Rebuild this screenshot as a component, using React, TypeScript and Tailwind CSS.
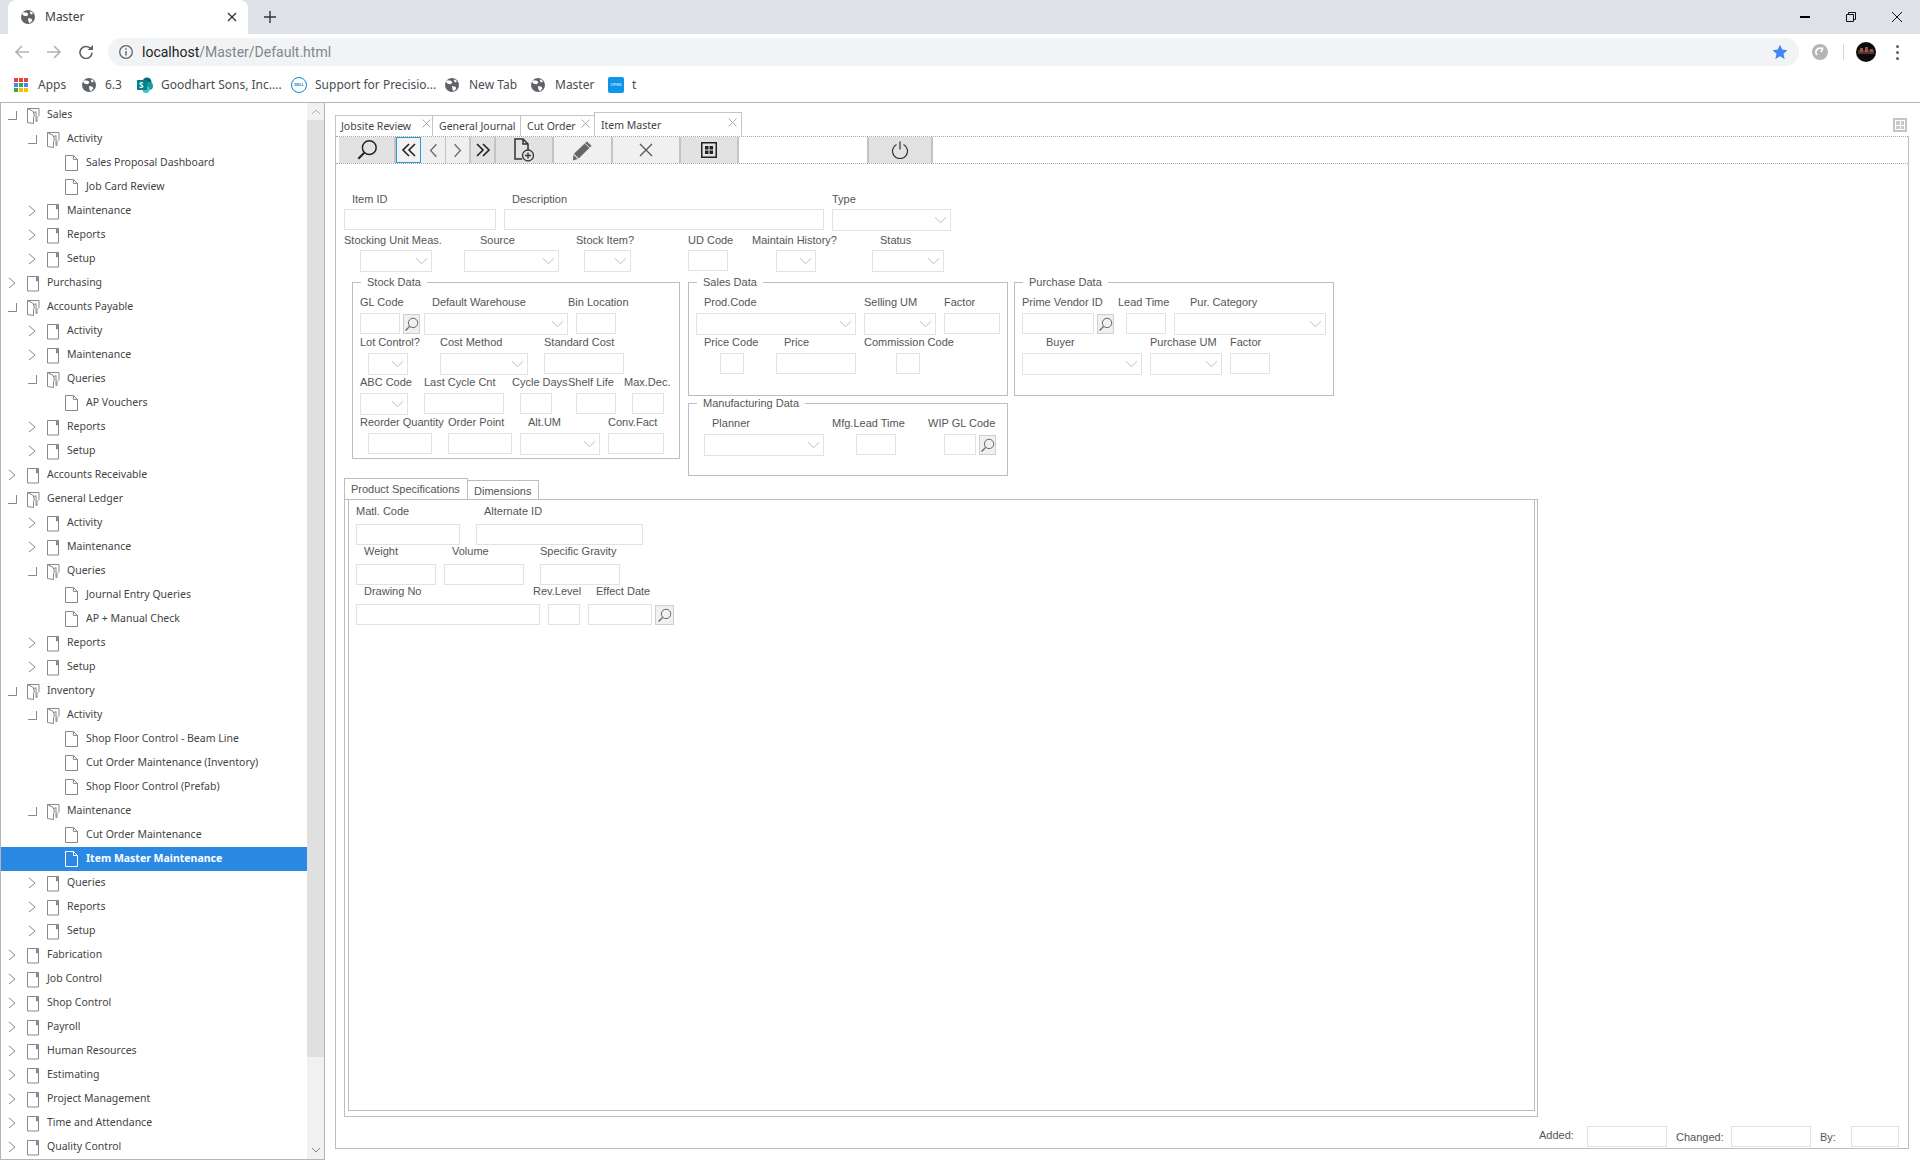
import type { ReactNode } from 'react';

type TreeRow = { level: 0 | 1 | 2; label: string; open?: boolean; selected?: boolean };

const treeRows: TreeRow[] = [
  { level: 0, label: 'Sales', open: true },
  { level: 1, label: 'Activity', open: true },
  { level: 2, label: 'Sales Proposal Dashboard' },
  { level: 2, label: 'Job Card Review' },
  { level: 1, label: 'Maintenance' },
  { level: 1, label: 'Reports' },
  { level: 1, label: 'Setup' },
  { level: 0, label: 'Purchasing' },
  { level: 0, label: 'Accounts Payable', open: true },
  { level: 1, label: 'Activity' },
  { level: 1, label: 'Maintenance' },
  { level: 1, label: 'Queries', open: true },
  { level: 2, label: 'AP Vouchers' },
  { level: 1, label: 'Reports' },
  { level: 1, label: 'Setup' },
  { level: 0, label: 'Accounts Receivable' },
  { level: 0, label: 'General Ledger', open: true },
  { level: 1, label: 'Activity' },
  { level: 1, label: 'Maintenance' },
  { level: 1, label: 'Queries', open: true },
  { level: 2, label: 'Journal Entry Queries' },
  { level: 2, label: 'AP + Manual Check' },
  { level: 1, label: 'Reports' },
  { level: 1, label: 'Setup' },
  { level: 0, label: 'Inventory', open: true },
  { level: 1, label: 'Activity', open: true },
  { level: 2, label: 'Shop Floor Control - Beam Line' },
  { level: 2, label: 'Cut Order Maintenance (Inventory)' },
  { level: 2, label: 'Shop Floor Control (Prefab)' },
  { level: 1, label: 'Maintenance', open: true },
  { level: 2, label: 'Cut Order Maintenance' },
  { level: 2, label: 'Item Master Maintenance', selected: true },
  { level: 1, label: 'Queries' },
  { level: 1, label: 'Reports' },
  { level: 1, label: 'Setup' },
  { level: 0, label: 'Fabrication' },
  { level: 0, label: 'Job Control' },
  { level: 0, label: 'Shop Control' },
  { level: 0, label: 'Payroll' },
  { level: 0, label: 'Human Resources' },
  { level: 0, label: 'Estimating' },
  { level: 0, label: 'Project Management' },
  { level: 0, label: 'Time and Attendance' },
  { level: 0, label: 'Quality Control' },
];

const levelPad = { 0: 'pl-[6px]', 1: 'pl-[26px]', 2: 'pl-[64px]' };

// small drawings

const Globe = ({ className = '' }: { className?: string }) => (
  <svg viewBox="0 0 16 16" className={`h-[14px] w-[14px] shrink-0 ${className}`}>
    <circle cx="8" cy="8" r="8" fill="#5f6368" />
    <path d="M3 2.5 7 3 8.5 5 6.5 7 3 6.5 1 4ZM8 9l4 1 1 2-3 3-1.500-2ZM11 1.500l3 2.500-2.500 1L10 3Z" fill="#fff" />
  </svg>
);

const TreeChevron = ({ white = false }: { white?: boolean }) => (
  <svg viewBox="0 0 8 12" className="h-[12px] w-[8px]">
    <path d="M1 1l6 5-6 5" fill="none" stroke={white ? '#fff' : '#888'} strokeWidth="1" />
  </svg>
);

const TreeCollapse = () => (
  <svg viewBox="0 0 9 9" className="h-[9px] w-[9px]">
    <path d="M0 8.500h8.500V0" fill="none" stroke="#888" strokeWidth="1" />
  </svg>
);

const ClosedFolder = () => (
  <svg viewBox="0 0 14 17" className="h-[17px] w-[14px] shrink-0">
    <path d="M10 1.500H1.500v14.500H12.500V1.500H11M10.500 1v5h1V1" fill="none" stroke="#888" strokeWidth="1" />
  </svg>
);

const OpenFolder = () => (
  <svg viewBox="0 0 14 17" className="h-[17px] w-[14px] shrink-0">
    <path d="M1.500 1.500h11.500v7L11 10.500v4h-1V4.500L7.500 6.500l1 1.500-1 2.500v6L1.500 15.500ZM1.500 1.500l6 3v2" fill="none" stroke="#888" strokeWidth="1" />
  </svg>
);

const LeafPage = ({ white = false }: { white?: boolean }) => (
  <svg viewBox="0 0 13 16" className="h-[16px] w-[13px] shrink-0">
    <path d="M.5.500h8l4 4v11H.500ZM8.500.500v4h4" fill={white ? 'none' : '#fff'} stroke={white ? '#fff' : '#888'} strokeWidth="1" />
  </svg>
);

const SelectChevron = () => (
  <svg viewBox="0 0 14 8" className="h-[8px] w-[13px]">
    <path d="M1 1l6 6 6-6" fill="none" stroke="#b8b8b8" strokeWidth="1" />
  </svg>
);

const Magnifier = ({ className }: { className: string }) => (
  <svg viewBox="0 0 24 24" className={className}>
    <circle cx="14.500" cy="9.500" r="7.500" fill="none" stroke="currentColor" strokeWidth="1.600" />
    <path d="M9 15 2.500 21.500" fill="none" stroke="currentColor" strokeWidth="2.200" />
  </svg>
);

const DoubleLeft = () => (
  <svg viewBox="0 0 16 16" className="h-[16px] w-[16px]">
    <path d="M8 2 2 8l6 6M14 2 8 8l6 6" fill="none" stroke="#222" strokeWidth="1.600" />
  </svg>
);

const DoubleRight = () => (
  <svg viewBox="0 0 16 16" className="h-[16px] w-[16px]">
    <path d="M2 2l6 6-6 6M8 2l6 6-6 6" fill="none" stroke="#222" strokeWidth="1.600" />
  </svg>
);

const SingleChevron = ({ right = false }: { right?: boolean }) => (
  <svg viewBox="0 0 10 18" className="h-[15px] w-[9px]">
    <path d={right ? 'M1.500 1.500 8.500 9l-7 7.500' : 'M8.500 1.500 1.500 9l7 7.500'} fill="none" stroke="#666" strokeWidth="1.500" />
  </svg>
);

const NewDoc = () => (
  <svg viewBox="0 0 20 24" className="h-[24px] w-[20px]">
    <path d="M8 21H1V1h8l5 5v7M9 1v5h5" fill="none" stroke="#333" strokeWidth="1.500" />
    <circle cx="14" cy="17.500" r="5.500" fill="#e0e0e0" stroke="#333" strokeWidth="1.300" />
    <path d="M14 14.500v6M11 17.500h6" stroke="#333" strokeWidth="1.300" />
  </svg>
);

const PencilIcon = () => (
  <svg viewBox="0 0 22 22" className="h-[21px] w-[21px]">
    <path d="M15.500 1.500 20.500 6 7 19.500l-5-5Z" fill="#666" />
    <path d="M1.500 15.500 6 20l-5 1.500Z" fill="#666" />
    <path d="M13.500 3.500l5 4.500" stroke="#f0f0f0" strokeWidth="1" />
  </svg>
);

const CrossIcon = () => (
  <svg viewBox="0 0 14 14" className="h-[14px] w-[14px]">
    <path d="M1 1l12 12M13 1 1 13" fill="none" stroke="#555" strokeWidth="1.300" />
  </svg>
);

const GridBox = () => (
  <svg viewBox="0 0 16 16" className="h-[16px] w-[16px]">
    <rect x=".75" y=".75" width="14.500" height="14.500" fill="none" stroke="#222" strokeWidth="1.500" />
    <path d="M4 4h3.500v3.500H4ZM8.500 4H12v3.500H8.500ZM4 8.500h3.500V12H4ZM8.500 8.500H12V12H8.500Z" fill="#222" />
  </svg>
);

const PowerIcon = () => (
  <svg viewBox="0 0 18 18" className="h-[18px] w-[18px]">
    <path d="M5.500 3.500a7.500 7.500 0 1 0 7 0M9 .5v8" fill="none" stroke="#333" strokeWidth="1.200" />
  </svg>
);

const TabClose = () => (
  <svg viewBox="0 0 9 9" className="h-[9px] w-[9px]">
    <path d="M.5.500l8 8M8.500.500l-8 8" fill="none" stroke="#aaa" strokeWidth="1" />
  </svg>
);

// form pieces

const Lbl = ({ className = '', children }: { className?: string; children: ReactNode }) => (
  <div className={`shrink-0 whitespace-nowrap ${className}`}>{children}</div>
);

const Inp = ({ className }: { className: string }) => (
  <div className={`h-[21px] shrink-0 border border-[#e2e2e2] bg-white ${className}`} />
);

const Sel = ({ className }: { className: string }) => (
  <div className={`flex h-[22px] shrink-0 items-center justify-end border border-[#e2e2e2] bg-white pr-[3px] ${className}`}>
    <SelectChevron />
  </div>
);

const Find = ({ className }: { className: string }) => (
  <div className={`mt-px flex h-[20px] shrink-0 items-center justify-center border border-[#cfcfcf] bg-[#f0f0f0] text-[#666] ${className}`}>
    <Magnifier className="h-[15px] w-[15px]" />
  </div>
);

const LabelRow = ({ children }: { children: ReactNode }) => (
  <div className="flex h-[16px] items-center">{children}</div>
);

const FieldRow = ({ children }: { children: ReactNode }) => (
  <div className="mt-[3px] flex h-[21px] items-start">{children}</div>
);

const GroupBox = ({ title, className, children }: { title: string; className: string; children: ReactNode }) => (
  <fieldset className={`border border-[#bdbdbd] ${className}`}>
    <legend className="ml-[8px] h-[14px] px-[6px] leading-[14px]">{title}</legend>
    <div className="mt-[5px]">{children}</div>
  </fieldset>
);

const ToolBtn = ({ className, children }: { className: string; children: ReactNode }) => (
  <div className={`flex h-full shrink-0 items-center justify-center ${className}`}>{children}</div>
);

const Sidebar = () => (
  <aside className="flex h-full w-[325px] shrink-0 border-x border-b border-[#b5b5b5] font-['Noto_Sans',sans-serif] text-[10.500px] text-[#444]">
    <div className="h-full w-[306px] shrink-0 overflow-hidden">
      {treeRows.map((row, i) => (
        <div
          key={i}
          className={`flex h-[24px] items-center ${levelPad[row.level]} ${row.selected ? 'bg-[#2b89e3] font-bold text-white' : ''}`}
        >
          {row.level < 2 && (
            <div className="flex w-[19px] shrink-0 items-center pl-px">
              {row.open ? <TreeCollapse /> : <TreeChevron />}
            </div>
          )}
          {row.level < 2 ? row.open ? <OpenFolder /> : <ClosedFolder /> : <LeafPage white={row.selected} />}
          <span className={row.level < 2 ? 'ml-[7px]' : 'ml-[8px]'}>{row.label}</span>
        </div>
      ))}
    </div>
    <div className="flex h-full w-[17px] shrink-0 flex-col bg-[#f1f1f1]">
      <div className="flex h-[17px] shrink-0 items-center justify-center">
        <svg viewBox="0 0 10 6" className="h-[6px] w-[10px]">
          <path d="M1 5l4-4 4 4" fill="none" stroke="#b0b0b0" strokeWidth="1" />
        </svg>
      </div>
      <div className="h-[937px] shrink-0 bg-[#e0e0e0]" />
      <div className="flex flex-1 items-end justify-center pb-[6px]">
        <svg viewBox="0 0 10 6" className="h-[6px] w-[10px]">
          <path d="M1 1l4 4 4-4" fill="none" stroke="#888" strokeWidth="1" />
        </svg>
      </div>
    </div>
  </aside>
);

const BrowserBar = () => (
  <div className="font-['Noto_Sans',sans-serif]">
    <div className="flex h-[34px] items-end bg-[#dee1e6] pl-[8px]">
      <div className="flex h-[34px] w-[240px] items-center rounded-t-[8px] bg-white pl-[13px] pr-[11px] text-[12px] text-[#3c4043]">
        <Globe />
        <span className="ml-[10px]">Master</span>
        <svg viewBox="0 0 10 10" className="ml-auto h-[10px] w-[10px]">
          <path d="M1 1l8 8M9 1 1 9" fill="none" stroke="#333" strokeWidth="1.300" />
        </svg>
      </div>
      <svg viewBox="0 0 12 12" className="mb-[11px] ml-[16px] h-[12px] w-[12px]">
        <path d="M6 0v12M0 6h12" stroke="#333" strokeWidth="1.400" />
      </svg>
      <div className="mb-[10px] ml-auto flex h-[14px] items-center">
        <div className="h-[1.500px] w-[10px] bg-black" />
        <svg viewBox="0 0 10 10" className="ml-[36px] h-[10px] w-[10px]">
          <path d="M2.500 2.500V.5h7v7h-2M.5 2.500h7v7h-7Z" fill="none" stroke="#111" strokeWidth="1" />
        </svg>
        <svg viewBox="0 0 10 10" className="ml-[36px] mr-[18px] h-[10px] w-[10px]">
          <path d="M0 0l10 10M10 0 0 10" fill="none" stroke="#111" strokeWidth="1" />
        </svg>
      </div>
    </div>
    <div className="flex h-[36px] items-center bg-white pl-[15px]">
      <svg viewBox="0 0 14 14" className="h-[14px] w-[14px]">
        <path d="M14 7H1M7 1 1 7l6 6" fill="none" stroke="#b0b3b7" strokeWidth="1.600" />
      </svg>
      <svg viewBox="0 0 14 14" className="ml-[18px] h-[14px] w-[14px]">
        <path d="M0 7h13M7 1l6 6-6 6" fill="none" stroke="#b0b3b7" strokeWidth="1.600" />
      </svg>
      <svg viewBox="0 0 14 14" className="ml-[18px] h-[14px] w-[14px]">
        <path d="M12.200 4.500A6 6 0 1 0 13 7.500" fill="none" stroke="#5f6368" strokeWidth="1.600" />
        <path d="M8.500 5H14V0Z" fill="#5f6368" />
      </svg>
      <div className="ml-[15px] flex h-[28px] w-[1691px] items-center rounded-full bg-[#f1f3f4] pl-[11px] pr-[11px]">
        <svg viewBox="0 0 14 14" className="h-[14px] w-[14px]">
          <circle cx="7" cy="7" r="6.300" fill="none" stroke="#5f6368" strokeWidth="1.300" />
          <path d="M7 6v4.500M7 3.300v1.500" stroke="#5f6368" strokeWidth="1.400" />
        </svg>
        <span className="ml-[9px] font-['Roboto',sans-serif] text-[14px] text-[#80868b]">
          <span className="text-[#202124]">localhost</span>/Master/Default.html
        </span>
        <svg viewBox="0 0 16 16" className="ml-auto h-[16px] w-[16px]">
          <path d="M8 .8l2.200 4.800 5.200.6-3.900 3.500 1.100 5.200L8 12.300l-4.600 2.600 1.100-5.200L.6 6.200l5.200-.6Z" fill="#4285f4" />
        </svg>
      </div>
      <svg viewBox="0 0 16 16" className="ml-[13px] h-[16px] w-[16px]">
        <circle cx="8" cy="8" r="8" fill="#b5b5b5" />
        <path d="M5 11a4 4 0 0 1 6-5.500M11 3.500 9 8" fill="none" stroke="#fff" strokeWidth="1.800" />
      </svg>
      <div className="ml-[15px] h-[16px] w-px bg-[#d5d5d5]" />
      <svg viewBox="0 0 20 20" className="ml-[12px] h-[20px] w-[20px]">
        <circle cx="10" cy="10" r="10" fill="#0b0b0b" />
        <path d="M2 8h16v4H2Z" fill="#5b3328" />
        <path d="M4 6h3v4H4ZM9 5h3v5H9ZM14 7h3v3h-3Z" fill="#8a5a4a" />
      </svg>
      <div className="ml-[20px] flex flex-col gap-[3px]">
        <div className="h-[3px] w-[3px] rounded-full bg-[#5f6368]" />
        <div className="h-[3px] w-[3px] rounded-full bg-[#5f6368]" />
        <div className="h-[3px] w-[3px] rounded-full bg-[#5f6368]" />
      </div>
    </div>
    <div className="flex h-[33px] items-center border-b border-[#b5b5b5] bg-white pl-[14px] pb-[3px] text-[12px] text-[#4a4d50]">
      <div className="flex w-[68px] shrink-0 items-center">
        <div className="grid h-[14px] w-[14px] grid-cols-3 gap-[1px]">
          <div className="bg-[#ea4335]" />
          <div className="bg-[#ea4335]" />
          <div className="bg-[#ea4335]" />
          <div className="bg-[#4285f4]" />
          <div className="bg-[#34a853]" />
          <div className="bg-[#4285f4]" />
          <div className="bg-[#34a853]" />
          <div className="bg-[#fbbc05]" />
          <div className="bg-[#fbbc05]" />
        </div>
        <span className="ml-[10px]">Apps</span>
      </div>
      <div className="flex w-[55px] shrink-0 items-center">
        <Globe />
        <span className="ml-[9px]">6.3</span>
      </div>
      <div className="flex w-[154px] shrink-0 items-center">
        <svg viewBox="0 0 16 16" className="h-[16px] w-[16px] shrink-0">
          <circle cx="10" cy="5" r="4.500" fill="#036c70" />
          <circle cx="12" cy="9" r="4" fill="#1a9ba1" />
          <circle cx="9" cy="12.500" r="3.500" fill="#37c6d0" />
          <rect x="0" y="3" width="10" height="10" fill="#038387" />
        </svg>
        <span className="absolute ml-[2px] text-[8px] font-bold text-white">S</span>
        <span className="ml-[8px]">Goodhart Sons, Inc....</span>
      </div>
      <div className="flex w-[154px] shrink-0 items-center">
        <div className="flex h-[16px] w-[16px] shrink-0 items-center justify-center rounded-full border border-[#0a86c9] text-[4px] font-bold text-[#0a86c9]">
          DELL
        </div>
        <span className="ml-[8px]">Support for Precisio...</span>
      </div>
      <div className="flex w-[86px] shrink-0 items-center">
        <Globe />
        <span className="ml-[10px]">New Tab</span>
      </div>
      <div className="flex w-[77px] shrink-0 items-center">
        <Globe />
        <span className="ml-[10px]">Master</span>
      </div>
      <div className="flex items-center">
        <div className="flex h-[16px] w-[16px] items-center justify-center rounded-[2px] bg-[#0d95e8] text-[4px] text-white">
          OPEN
        </div>
        <span className="ml-[8px]">t</span>
      </div>
    </div>
  </div>
);

const TopTabs = () => (
  <div className="flex h-[23px] shrink-0 items-end font-['Noto_Sans',sans-serif] text-[10.500px] text-[#444]">
    <div className="flex h-[21px] w-[97px] items-start border-l border-t border-[#c4c4c4] pl-[5px] leading-[21px]">
      <span>Jobsite Review</span>
      <div className="ml-auto mr-[1px] mt-[3px] flex leading-none">
        <TabClose />
      </div>
    </div>
    <div className="flex h-[21px] w-[88px] border-l border-t border-[#c4c4c4] pl-[6px] leading-[21px]">General Journal</div>
    <div className="flex h-[21px] w-[74px] items-start border-l border-t border-[#c4c4c4] pl-[6px] leading-[21px]">
      <span>Cut Order</span>
      <div className="ml-auto mr-[4px] mt-[3px] flex leading-none">
        <TabClose />
      </div>
    </div>
    <div className="flex h-[24px] w-[148px] items-start border-x border-t border-[#c4c4c4] bg-white pl-[6px] leading-[24px]">
      <span>Item Master Maintenance</span>
      <div className="ml-auto mr-[4px] mt-[5px] flex leading-none">
        <TabClose />
      </div>
    </div>
    <div className="mb-[4px] ml-auto mr-[2px] grid h-[14px] w-[14px] grid-cols-2 gap-[1px] border-2 border-[#c4c4c4] bg-white p-px">
      <div className="bg-[#c8c8c8]" />
      <div className="bg-[#c8c8c8]" />
      <div className="bg-[#c8c8c8]" />
      <div className="bg-[#c8c8c8]" />
    </div>
  </div>
);

const Toolbar = () => (
  <div className="flex h-[28px] shrink-0 border-y border-dotted border-[#aaaaaa] pl-[3px]">
    <ToolBtn className="w-[57px] border-r-2 border-[#c4c4c4] bg-[#e2e2e2] text-[#222]">
      <Magnifier className="h-[22px] w-[22px]" />
    </ToolBtn>
    <ToolBtn className="w-[25px] border border-[#2a9ad6] bg-[#f2f2f2]">
      <DoubleLeft />
    </ToolBtn>
    <ToolBtn className="w-[25px] border-r border-[#c4c4c4] bg-[#efefef]">
      <SingleChevron />
    </ToolBtn>
    <ToolBtn className="w-[25px] border-r-2 border-[#c4c4c4] bg-[#efefef]">
      <SingleChevron right />
    </ToolBtn>
    <ToolBtn className="w-[25px] border-r-2 border-[#c4c4c4] bg-[#e2e2e2]">
      <DoubleRight />
    </ToolBtn>
    <ToolBtn className="w-[58px] border-r-2 border-[#c4c4c4] bg-[#e2e2e2]">
      <NewDoc />
    </ToolBtn>
    <ToolBtn className="w-[59px] border-r-2 border-[#c4c4c4] bg-[#f0f0f0]">
      <PencilIcon />
    </ToolBtn>
    <ToolBtn className="w-[68px] border-r-2 border-[#c4c4c4] bg-[#f0f0f0]">
      <CrossIcon />
    </ToolBtn>
    <ToolBtn className="w-[58px] border-r-2 border-[#c4c4c4] bg-[#e2e2e2]">
      <GridBox />
    </ToolBtn>
    <ToolBtn className="ml-[128px] w-[66px] border-x-2 border-[#c4c4c4] bg-[#e2e2e2]">
      <PowerIcon />
    </ToolBtn>
  </div>
);

const ItemForm = () => (
  <div className="font-['Liberation_Sans',sans-serif] text-[11px] text-[#555]">
    <div className="mt-[27px]">
      <LabelRow>
        <Lbl className="ml-[16px] w-[160px]">Item ID</Lbl>
        <Lbl className="w-[320px]">Description</Lbl>
        <Lbl>Type</Lbl>
      </LabelRow>
      <div className="mt-[2px] flex h-[22px] items-start">
        <Inp className="ml-[8px] w-[152px]" />
        <Inp className="ml-[8px] w-[320px]" />
        <Sel className="ml-[8px] w-[119px]" />
      </div>
    </div>
    <div className="mt-[1px]">
      <LabelRow>
        <Lbl className="ml-[8px] w-[136px]">Stocking Unit Meas.</Lbl>
        <Lbl className="w-[96px]">Source</Lbl>
        <Lbl className="w-[112px]">Stock Item?</Lbl>
        <Lbl className="w-[64px]">UD Code</Lbl>
        <Lbl className="w-[128px]">Maintain History?</Lbl>
        <Lbl>Status</Lbl>
      </LabelRow>
      <div className="mt-[2px] flex h-[22px] items-start">
        <Sel className="ml-[24px] w-[72px]" />
        <Sel className="ml-[32px] w-[95px]" />
        <Sel className="ml-[25px] w-[47px]" />
        <Inp className="ml-[57px] w-[40px]" />
        <Sel className="ml-[48px] w-[40px]" />
        <Sel className="ml-[56px] w-[72px]" />
      </div>
    </div>
    <div className="mt-[3px] flex items-start pl-[16px]">
      <GroupBox title="Stock Data" className="h-[184px] w-[328px] shrink-0">
        <LabelRow>
          <Lbl className="ml-[7px] w-[72px]">GL Code</Lbl>
          <Lbl className="w-[136px]">Default Warehouse</Lbl>
          <Lbl>Bin Location</Lbl>
        </LabelRow>
        <FieldRow>
          <Inp className="ml-[7px] w-[40px]" />
          <Find className="ml-[3px] w-[17px]" />
          <Sel className="ml-[4px] w-[144px]" />
          <Inp className="ml-[8px] w-[40px]" />
        </FieldRow>
        <LabelRow>
          <Lbl className="ml-[7px] w-[80px]">Lot Control?</Lbl>
          <Lbl className="w-[104px]">Cost Method</Lbl>
          <Lbl>Standard Cost</Lbl>
        </LabelRow>
        <FieldRow>
          <Sel className="ml-[15px] w-[40px]" />
          <Sel className="ml-[32px] w-[88px]" />
          <Inp className="ml-[16px] w-[80px]" />
        </FieldRow>
        <LabelRow>
          <Lbl className="ml-[7px] w-[64px]">ABC Code</Lbl>
          <Lbl className="w-[88px]">Last Cycle Cnt</Lbl>
          <Lbl className="w-[56px]">Cycle Days</Lbl>
          <Lbl className="w-[56px]">Shelf Life</Lbl>
          <Lbl>Max.Dec.</Lbl>
        </LabelRow>
        <FieldRow>
          <Sel className="ml-[7px] w-[48px]" />
          <Inp className="ml-[16px] w-[80px]" />
          <Inp className="ml-[16px] w-[32px]" />
          <Inp className="ml-[24px] w-[40px]" />
          <Inp className="ml-[16px] w-[32px]" />
        </FieldRow>
        <LabelRow>
          <Lbl className="ml-[7px] w-[88px]">Reorder Quantity</Lbl>
          <Lbl className="w-[80px]">Order Point</Lbl>
          <Lbl className="w-[80px]">Alt.UM</Lbl>
          <Lbl>Conv.Fact</Lbl>
        </LabelRow>
        <FieldRow>
          <Inp className="ml-[15px] w-[64px]" />
          <Inp className="ml-[16px] w-[64px]" />
          <Sel className="ml-[8px] w-[80px]" />
          <Inp className="ml-[8px] w-[56px]" />
        </FieldRow>
      </GroupBox>
      <div className="ml-[8px] flex w-[320px] shrink-0 flex-col">
        <GroupBox title="Sales Data" className="h-[121px] w-full">
          <LabelRow>
            <Lbl className="ml-[15px] w-[160px]">Prod.Code</Lbl>
            <Lbl className="w-[80px]">Selling UM</Lbl>
            <Lbl>Factor</Lbl>
          </LabelRow>
          <FieldRow>
            <Sel className="ml-[7px] w-[160px]" />
            <Sel className="ml-[8px] w-[72px]" />
            <Inp className="ml-[8px] w-[56px]" />
          </FieldRow>
          <LabelRow>
            <Lbl className="ml-[15px] w-[80px]">Price Code</Lbl>
            <Lbl className="w-[80px]">Price</Lbl>
            <Lbl>Commission Code</Lbl>
          </LabelRow>
          <FieldRow>
            <Inp className="ml-[31px] w-[24px]" />
            <Inp className="ml-[32px] w-[80px]" />
            <Inp className="ml-[40px] w-[24px]" />
          </FieldRow>
        </GroupBox>
        <GroupBox title="Manufacturing Data" className="h-[80px] w-full">
          <LabelRow>
            <Lbl className="ml-[23px] w-[120px]">Planner</Lbl>
            <Lbl className="w-[96px]">Mfg.Lead Time</Lbl>
            <Lbl>WIP GL Code</Lbl>
          </LabelRow>
          <FieldRow>
            <Sel className="ml-[15px] w-[120px]" />
            <Inp className="ml-[32px] w-[40px]" />
            <Inp className="ml-[48px] w-[32px]" />
            <Find className="ml-[3px] w-[17px]" />
          </FieldRow>
        </GroupBox>
      </div>
      <GroupBox title="Purchase Data" className="ml-[6px] h-[121px] w-[320px] shrink-0">
        <LabelRow>
          <Lbl className="ml-[7px] w-[96px]">Prime Vendor ID</Lbl>
          <Lbl className="w-[72px]">Lead Time</Lbl>
          <Lbl>Pur. Category</Lbl>
        </LabelRow>
        <FieldRow>
          <Inp className="ml-[7px] w-[72px]" />
          <Find className="ml-[3px] w-[17px]" />
          <Inp className="ml-[12px] w-[40px]" />
          <Sel className="ml-[8px] w-[152px]" />
        </FieldRow>
        <LabelRow>
          <Lbl className="ml-[31px] w-[104px]">Buyer</Lbl>
          <Lbl className="w-[80px]">Purchase UM</Lbl>
          <Lbl>Factor</Lbl>
        </LabelRow>
        <FieldRow>
          <Sel className="ml-[7px] w-[120px]" />
          <Sel className="ml-[8px] w-[72px]" />
          <Inp className="ml-[8px] w-[40px]" />
        </FieldRow>
      </GroupBox>
    </div>

    <div className="ml-[8px] mt-[2px] flex h-[639px] w-[1194px] flex-col">
      <div className="flex h-[21px] shrink-0 items-end">
        <div className="h-[21px] w-[124px] border-x border-t border-[#bdbdbd] pl-[6px] leading-[20px]">Product Specifications</div>
        <div className="h-[19px] w-[71px] border-r border-t border-[#bdbdbd] pl-[6px] leading-[20px]">Dimensions</div>
      </div>
      <div className="flex-1 border border-[#bdbdbd] pb-[5px] pl-[3px] pr-[2px]">
        <div className="h-full border-x border-b border-[#bdbdbd] pt-[3px]">
          <LabelRow>
            <Lbl className="ml-[7px] w-[128px]">Matl. Code</Lbl>
            <Lbl>Alternate ID</Lbl>
          </LabelRow>
          <div className="mt-[5px] flex h-[19px] items-start">
            <Inp className="ml-[7px] w-[104px]" />
            <Inp className="ml-[16px] w-[167px]" />
          </div>
          <LabelRow>
            <Lbl className="ml-[15px] w-[88px]">Weight</Lbl>
            <Lbl className="w-[88px]">Volume</Lbl>
            <Lbl>Specific Gravity</Lbl>
          </LabelRow>
          <div className="mt-[5px] flex h-[19px] items-start">
            <Inp className="ml-[7px] w-[80px]" />
            <Inp className="ml-[8px] w-[80px]" />
            <Inp className="ml-[16px] w-[80px]" />
          </div>
          <LabelRow>
            <Lbl className="ml-[15px] w-[169px]">Drawing No</Lbl>
            <Lbl className="w-[63px]">Rev.Level</Lbl>
            <Lbl>Effect Date</Lbl>
          </LabelRow>
          <div className="mt-[5px] flex h-[21px] items-start">
            <Inp className="ml-[7px] w-[184px]" />
            <Inp className="ml-[8px] w-[32px]" />
            <Inp className="ml-[8px] w-[64px]" />
            <Find className="ml-[3px] w-[19px]" />
          </div>
        </div>
      </div>
    </div>

    <div className="mt-[9px] flex h-[21px] items-start pl-[1203px]">
      <Lbl className="mt-px w-[48px]">Added:</Lbl>
      <Inp className="w-[80px]" />
      <Lbl className="ml-[9px] mt-[3px] w-[55px]">Changed:</Lbl>
      <Inp className="w-[80px]" />
      <Lbl className="ml-[9px] mt-[3px] w-[31px]">By:</Lbl>
      <Inp className="w-[48px]" />
    </div>
  </div>
);

export default function App() {
  return (
    <div className="flex h-[1160px] w-[1920px] flex-col overflow-hidden bg-white">
      <BrowserBar />
      <div className="flex min-h-0 flex-1">
        <Sidebar />
        <main className="ml-[10px] flex h-[1046px] w-[1574px] flex-col pt-[10px]">
          <TopTabs />
          <div className="flex min-h-0 flex-1 flex-col border-x border-b border-[#bdbdbd]">
            <Toolbar />
            <ItemForm />
          </div>
        </main>
      </div>
    </div>
  );
}
